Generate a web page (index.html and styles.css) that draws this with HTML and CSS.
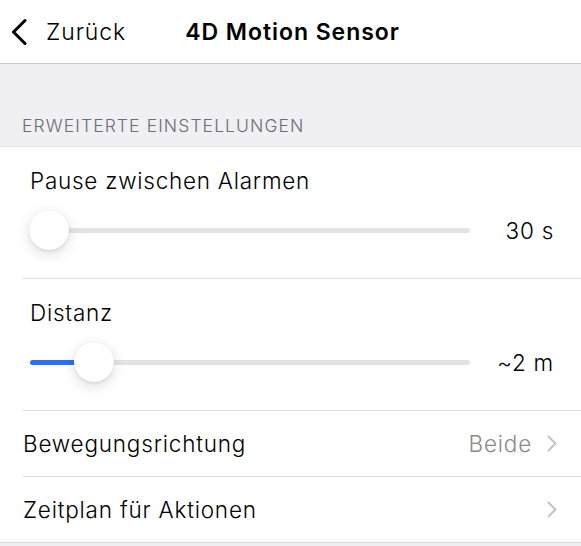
FILE: index.html
```html
<!DOCTYPE html>
<html lang="de">
<head>
<meta charset="utf-8">
<link rel="stylesheet" href="styles.css">
</head>
<body>
<header class="nav">
  <div class="nav-back">
    <svg class="back-icon" viewBox="0 0 16 28" width="16" height="28"><path d="M14 2.5 L2.5 14 L14 25.5" fill="none" stroke="#000" stroke-width="3" stroke-linecap="round" stroke-linejoin="round"/></svg>
    <span>Zurück</span>
  </div>
  <div class="nav-title">4D Motion Sensor</div>
  <div></div>
</header>
<main class="page">
  <div class="section-header">ERWEITERTE EINSTELLUNGEN</div>
  <section class="group">
    <div class="slider-row">
      <div class="slider-label">Pause zwischen Alarmen</div>
      <div class="slider-line">
        <div class="track">
          <div class="fill" style="width:0px"></div>
          <div class="thumb" style="left:19px"></div>
        </div>
        <div class="slider-value">30 s</div>
      </div>
    </div>
    <div class="slider-row">
      <div class="slider-label">Distanz</div>
      <div class="slider-line">
        <div class="track">
          <div class="fill" style="width:50px"></div>
          <div class="thumb" style="left:64px"></div>
        </div>
        <div class="slider-value">~2 m</div>
      </div>
    </div>
    <div class="cell">
      <span class="cell-label">Bewegungsrichtung</span>
      <span class="cell-detail">Beide</span>
      <svg class="chev" viewBox="0 0 10 17" width="10" height="17"><path d="M1.5 1.5 L8.5 8.5 L1.5 15.5" fill="none" stroke="#c4c4c7" stroke-width="2" stroke-linecap="round" stroke-linejoin="round"/></svg>
    </div>
    <div class="cell">
      <span class="cell-label">Zeitplan für Aktionen</span>
      <svg class="chev" viewBox="0 0 10 17" width="10" height="17"><path d="M1.5 1.5 L8.5 8.5 L1.5 15.5" fill="none" stroke="#c4c4c7" stroke-width="2" stroke-linecap="round" stroke-linejoin="round"/></svg>
    </div>
  </section>
</main>
</body>
</html>
```
FILE: styles.css
```css
html, body {
  margin: 0;
  padding: 0;
}
body {
  font-family: "Inter", "Liberation Sans", sans-serif;
  font-weight: 300;
  color: #000;
  background: #f0eff4;
  width: 581px;
  height: 546px;
  overflow: hidden;
}
.nav {
  height: 63px;
  background: #fff;
  border-bottom: 1px solid #c9c9cc;
  display: grid;
  grid-template-columns: 1fr auto 1fr;
  align-items: center;
}
.nav-back {
  display: flex;
  align-items: center;
  padding-left: 11px;
  font-size: 23px;
  letter-spacing: 0.9px;
  gap: 19px;
}
.back-icon {
  display: block;
}
.nav-title {
  font-size: 23px;
  font-weight: 600;
  letter-spacing: 0.95px;
  padding-left: 4px;
}
.page {
  padding-top: 50px;
}
.section-header {
  font-size: 17.5px;
  letter-spacing: 1.1px;
  color: #6d6d72;
  padding: 0 0 9px 22px;
  height: 23px;
  line-height: 23px;
  border-bottom: 1px solid #e2e2e6;
}
.group {
  background: #fff;
  border-bottom: 1px solid #d6d6da;
}
.slider-row {
  height: 131px;
  margin-left: 23px;
  border-bottom: 1px solid #dcdcdf;
  display: flex;
  flex-direction: column;
}
.slider-label {
  font-size: 22.5px;
  letter-spacing: 0.75px;
  padding: 20px 0 0 7px;
  line-height: 28px;
}
.slider-line {
  display: flex;
  align-items: center;
  margin-top: 15px;
  padding-left: 7px;
  padding-right: 28px;
  height: 40px;
}
.track {
  position: relative;
  flex: 1;
  height: 5px;
  border-radius: 3px;
  background: #e3e3e6;
}
.fill {
  height: 5px;
  border-radius: 3px;
  background: #2e6ff0;
}
.thumb {
  position: absolute;
  top: 50%;
  width: 40px;
  height: 40px;
  margin: -20px 0 0 -20px;
  border-radius: 50%;
  background: #fff;
  box-shadow: 0 4px 14px rgba(0,0,0,0.13), 0 2px 3px rgba(0,0,0,0.06), 0 0 1px rgba(0,0,0,0.12);
}
.slider-value {
  width: 84px;
  text-align: right;
  font-size: 22.5px;
  letter-spacing: 0.75px;
  margin-right: -1px;
}
.cell {
  height: 65px;
  margin-left: 23px;
  padding-right: 24px;
  display: flex;
  align-items: center;
  font-size: 22.5px;
  letter-spacing: 0.8px;
}
.cell + .cell {
  border-top: 1px solid #dcdcdf;
}
.cell-label {
  flex: 1;
}
.cell-detail {
  color: #8a8a8e;
  margin-right: 15px;
}
.chev {
  display: block;
}
```
